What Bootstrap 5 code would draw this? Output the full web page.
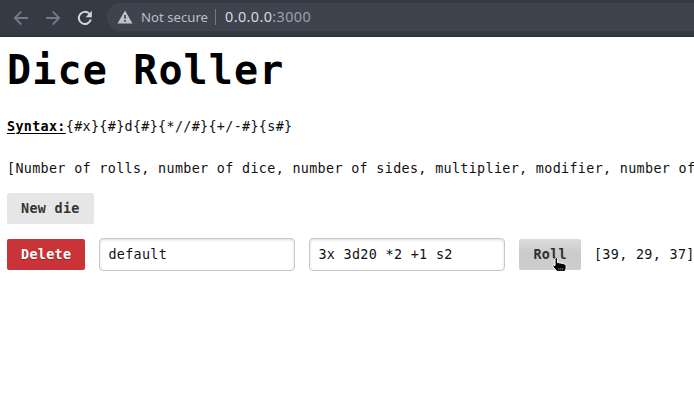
<!DOCTYPE html>
<html lang="en">
<head>
<meta charset="utf-8">
<meta name="viewport" content="width=device-width, initial-scale=1">
<title>Dice Roller</title>
<link rel="stylesheet" href="https://cdn.jsdelivr.net/npm/bootstrap@5.3.0/dist/css/bootstrap.min.css">
<style>
html, body { overflow: hidden; }
body { font: 13.4px/20px "DejaVu Sans Mono", monospace; letter-spacing: .333px; color: #111; background: #fff; }
.toolbar { height: 37px; background: #353a45; border-bottom: 1px solid #2a2e37; padding-left: 13px; }
.toolbar svg { flex: none; }
.omnibox { height: 28px; margin: 3px 0 5px 14px; padding-left: 10px; background: #3e434e; border-radius: 14px 0 0 14px; font-family: "Noto Sans", sans-serif; letter-spacing: 0; white-space: pre; }
.secure { font-size: 13.2px; color: #b9bfc9; width: 68px; margin-left: 8px; }
.divider { width: 1px; height: 16px; background: #747a85; margin: 0 9px 0 6px; }
.address { font-size: 14.4px; color: #d5dae3; letter-spacing: .4px; }
.address span { color: #9ba1ac; }
.page { padding: 0 0 0 7px; white-space: nowrap; }
.title { font-size: 40px; line-height: 46px; font-weight: 700; letter-spacing: 1.15px; color: #000; padding-top: 10px; margin: 0; }
.syntax { margin-top: 24px; }
.syntax b { color: #000; text-decoration: underline; text-underline-offset: 2px; }
.hint { margin-top: 22px; }
.btn-die { height: 31px; padding: 0 14px; border: 0; border-radius: 2px; font: inherit; font-weight: 700; letter-spacing: inherit; background: #e6e6e6; color: #333; flex: none; }
.btn-die.remove { background: #ca3439; color: #fff; text-shadow: 0 1px 1px rgba(0,0,0,.3); }
.btn-die.roll { background: linear-gradient(#dcdcdc, #cbcbcb 45%, #cdcdcd); color: #2e2e2e; }
.field { width: 196px; height: 33px; padding: 0 8px; border: 1px solid #c8c8c8; border-radius: 4px; box-shadow: inset 0 1px 3px #ddd; font: inherit; letter-spacing: inherit; color: #111; flex: none; }
.new-row { padding-top: 14px; }
.die-row { gap: 14px; margin-top: 14px; }
.result { margin-left: -1px; }
.pointer { left: 33px; top: 18px; }
</style>
<script src="https://cdn.jsdelivr.net/npm/bootstrap@5.3.0/dist/js/bootstrap.bundle.min.js"></script>
</head>
<body>
<header class="toolbar d-flex align-items-center">
<svg width="16" height="16" viewBox="0 0 16 16" fill="none" stroke="#737985" stroke-width="1.8"><path d="M15 8H2M8.3 1.5 1.8 8l6.5 6.5"/></svg>
<svg class="ms-3" width="16" height="16" viewBox="0 0 16 16" fill="none" stroke="#737985" stroke-width="1.8"><path d="M1 8h13M7.7 1.5 14.2 8l-6.5 6.5"/></svg>
<svg class="ms-3" width="16" height="16" viewBox="0 0 16 16"><path d="M13.8 9.6A6.1 6.1 0 1 1 12.2 3.6" fill="none" stroke="#d3d8e0" stroke-width="2"/><path d="M14.8.8v6.4H8.6z" fill="#d3d8e0"/></svg>
<div class="omnibox d-flex align-items-center flex-grow-1">
<svg width="16" height="14" viewBox="0 0 16 14"><path d="M8 .5 15.5 13.5H.5z" fill="#bdc3cd"/><path d="M8 5v3.7M8 10v1.8" stroke="#3e434e" stroke-width="1.7"/></svg>
<span class="secure">Not secure</span><span class="divider"></span>
<span class="address">0.0.0.0<span>:3000</span></span>
</div>
</header>
<main class="page">
<h1 class="title">Dice Roller</h1>
<p class="syntax mb-0"><b>Syntax:</b>{#x}{#}d{#}{*//#}{+/-#}{s#}</p>
<p class="hint mb-0">[Number of rolls, number of dice, number of sides, multiplier, modifier, number of successes]</p>
<div class="new-row d-flex"><button class="btn-die" type="button">New die</button></div>
<div class="die-row d-flex align-items-center">
<button class="btn-die remove" type="button">Delete</button>
<input class="field" type="text" value="default" aria-label="Name">
<input class="field" type="text" value="3x 3d20 *2 +1 s2" aria-label="Dice">
<div class="position-relative d-flex">
<button class="btn-die roll" type="button">Roll</button>
<svg class="pointer position-absolute" width="15" height="17" viewBox="0 0 15 17"><path d="M3 2.2Q3 .6 4.3.6t1.3 1.6v3.6q1.2-.8 2.3.3 1.2-.6 2.2.4 1.3-.4 2 .6 2-.3 2 1.6v3l-1.1 2.2v2.4H4.9v-2L1.2 10Q.3 7.9 1.6 8q.8 0 1.4.8z" fill="#000" stroke="#fff"/><path d="M6.8 11v2.5M8.8 11v2.5M10.8 11v2.5" stroke="#aaa" stroke-width=".6"/></svg>
</div>
<span class="result">[39, 29, 37]</span>
</div>
</main>
</body>
</html>
